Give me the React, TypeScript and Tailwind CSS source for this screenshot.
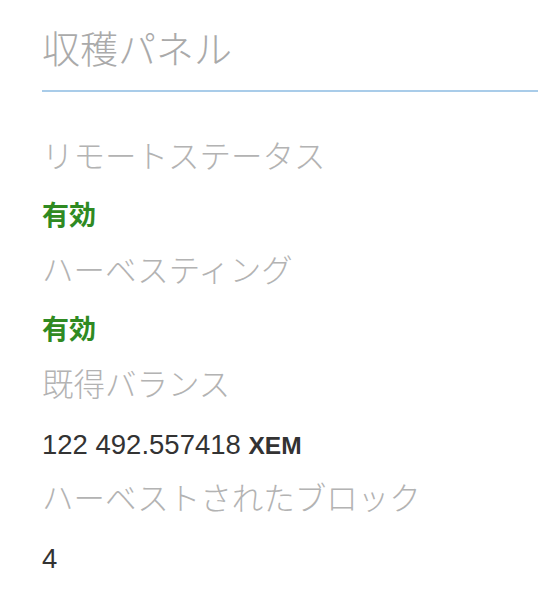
import React from "react";

const stack = { fontFamily: "'Liberation Sans', 'Noto Sans CJK JP', sans-serif" };

function Label({ children }: { children: React.ReactNode }) {
  return (
    <div className="h-[57px] leading-[57px] text-[31.5px] font-light text-[#b3b3b3] whitespace-nowrap">
      {children}
    </div>
  );
}

function Value({ children, className = "" }: { children: React.ReactNode; className?: string }) {
  return (
    <div className={"h-[57px] leading-[61px] whitespace-nowrap " + className}>{children}</div>
  );
}

export default function App() {
  return (
    <div className="w-[538px] h-[602px] bg-white pl-[42px] pt-[22px]" style={stack}>
      <div className="border-b-2 border-[#a9cce9] pb-[11px]">
        <div className="h-[57px] leading-[57px] text-[38px] font-light text-[#aaaaaa]">収穫パネル</div>
      </div>
      <div className="mt-[37px] flex flex-col">
        <Label>リモートステータス</Label>
        <Value className="text-[27px] font-bold text-[#2f8a22]">有効</Value>
        <Label>ハーベスティング</Label>
        <Value className="text-[27px] font-bold text-[#2f8a22]">有効</Value>
        <Label>既得バランス</Label>
        <Value className="text-[27.5px] text-[#333333]">
          122 492.557418 <span className="font-bold text-[24.5px]">XEM</span>
        </Value>
        <Label>ハーベストされたブロック</Label>
        <Value className="text-[27.5px] text-[#333333]">4</Value>
      </div>
    </div>
  );
}
